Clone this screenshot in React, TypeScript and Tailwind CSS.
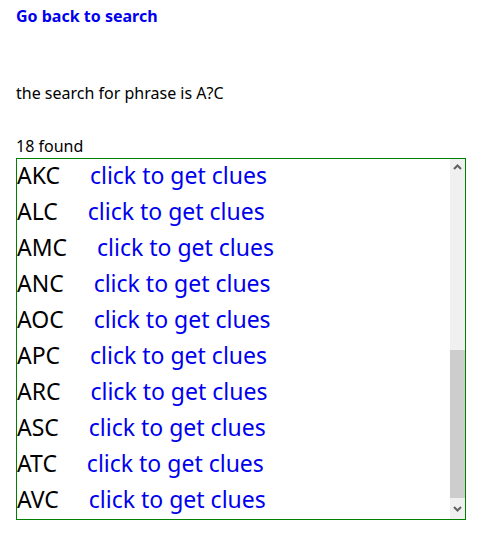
const words = [
  'ABC', 'ACC', 'ADC', 'AEC', 'AFC', 'AGC', 'AHC', 'AIC',
  'AKC', 'ALC', 'AMC', 'ANC', 'AOC', 'APC', 'ARC', 'ASC', 'ATC', 'AVC',
];

const Chevron = ({ up }: { up?: boolean }) => (
  <svg width="9" height="6" viewBox="0 0 9 6" className={up ? '' : 'rotate-180'}>
    <path d="M1 5 L4.5 1.5 L8 5" fill="none" stroke="#606060" strokeWidth="2" />
  </svg>
);

const App = () => {
  return (
    <div className="px-4 pt-[4px] text-black" style={{ fontFamily: '"Noto Sans", sans-serif' }}>
      <a href="#" className="block text-base font-bold leading-6 text-[#0000ee]">
        Go back to search
      </a>

      <p className="mt-[53px] text-base leading-6">the search for phrase is A?C</p>

      <p className="mt-[29px] text-base leading-6">18 found</p>

      {/* list box, shown scrolled to the end */}
      <div className="flex h-[362px] w-[450px] border border-[#008000]">
        <div className="flex flex-1 flex-col justify-end overflow-hidden pb-[2px] text-[23px] leading-[36px]">
          {words.map((w) => (
            <div key={w} className="shrink-0 whitespace-pre">
              {w}
              {'     '}
              <a href="#" className="text-[#0000ee]">
                click to get clues
              </a>
            </div>
          ))}
        </div>

        {/* scrollbar */}
        <div className="flex w-[15px] flex-col bg-[#f0f0f0]">
          <div className="flex h-[15px] items-center justify-center">
            <Chevron up />
          </div>
          <div className="flex flex-1 flex-col justify-end">
            <div className="h-[148px] bg-[#cdcdcd]" />
          </div>
          <div className="flex h-[21px] items-center justify-center">
            <Chevron />
          </div>
        </div>
      </div>
    </div>
  );
};

export default App;
